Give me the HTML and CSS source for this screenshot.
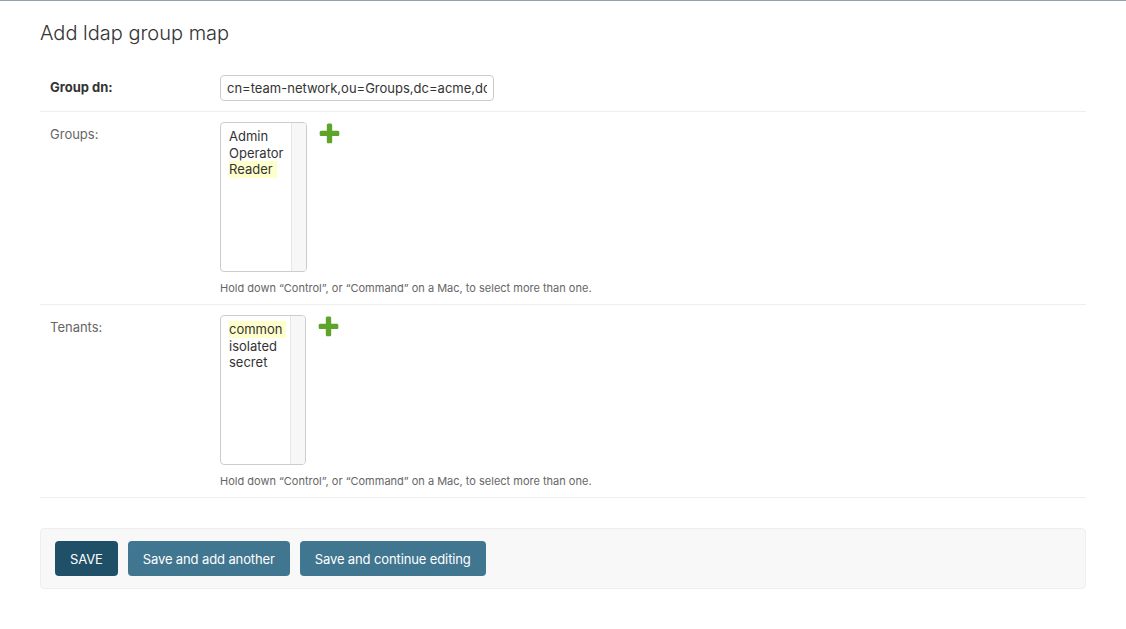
FILE: index.html
```html
<!DOCTYPE html>
<html lang="en">
<head>
    <meta charset="UTF-8">
    <title>Add ldap group map</title>
    <link rel="stylesheet" href="styles.css">
</head>
<body>
    <div class="header-line"></div>
    <div class="content">
        <h1>Add ldap group map</h1>
        <form>
            <fieldset class="module">
                <div class="form-row">
                    <label class="required">Group dn:</label>
                    <input type="text" class="text-input" value="cn=team-network,ou=Groups,dc=acme,dc=com">
                </div>
                <div class="form-row">
                    <div class="field">
                        <label>Groups:</label>
                        <div class="widget-wrapper">
                            <div class="multi-select">
                                <div class="options">
                                    <div class="option">Admin</div>
                                    <div class="option">Operator</div>
                                    <div class="option marked">Reader</div>
                                </div>
                                <div class="track"></div>
                            </div>
                            <a class="add-link" href="#">
                                <svg viewBox="0 0 1792 1792" width="25" height="25"><path fill="#5ea32a" d="M1600 796v192q0 40-28 68t-68 28h-416v416q0 40-28 68t-68 28h-192q-40 0-68-28t-28-68v-416h-416q-40 0-68-28t-28-68v-192q0-40 28-68t68-28h416v-416q0-40 28-68t68-28h192q40 0 68 28t28 68v416h416q40 0 68 28t28 68z"/></svg>
                            </a>
                        </div>
                    </div>
                    <div class="help">Hold down “Control”, or “Command” on a Mac, to select more than one.</div>
                </div>
                <div class="form-row">
                    <div class="field">
                        <label>Tenants:</label>
                        <div class="widget-wrapper">
                            <div class="multi-select narrow">
                                <div class="options">
                                    <div class="option marked">common</div>
                                    <div class="option">isolated</div>
                                    <div class="option">secret</div>
                                </div>
                                <div class="track"></div>
                            </div>
                            <a class="add-link" href="#">
                                <svg viewBox="0 0 1792 1792" width="25" height="25"><path fill="#5ea32a" d="M1600 796v192q0 40-28 68t-68 28h-416v416q0 40-28 68t-68 28h-192q-40 0-68-28t-28-68v-416h-416q-40 0-68-28t-28-68v-192q0-40 28-68t68-28h416v-416q0-40 28-68t68-28h192q40 0 68 28t28 68v416h416q40 0 68 28t28 68z"/></svg>
                            </a>
                        </div>
                    </div>
                    <div class="help">Hold down “Control”, or “Command” on a Mac, to select more than one.</div>
                </div>
            </fieldset>
            <div class="submit-row">
                <button type="button" class="button default">SAVE</button>
                <button type="button" class="button">Save and add another</button>
                <button type="button" class="button">Save and continue editing</button>
            </div>
        </form>
    </div>
</body>
</html>
```

FILE: styles.css
```css
body {
    margin: 0;
    padding: 0;
    font-family: Inter, Roboto, "Noto Sans", Arial, sans-serif;
    font-size: 14px;
    color: #333;
    background: #fff;
}
.header-line {
    height: 1px;
    background: #8fa3ae;
}
.content {
    padding: 20px 40px;
}
h1 {
    margin: 0 0 20px;
    font-size: 20px;
    font-weight: 300;
    color: #333;
    line-height: 24px;
}
fieldset {
    margin: 0;
    padding: 0;
    border: none;
}
.form-row {
    display: flow-root;
    padding: 10px;
    border-bottom: 1px solid #eee;
    font-size: 13px;
}
.form-row label {
    float: left;
    width: 160px;
    padding: 4px 10px 0 0;
    color: #666;
    line-height: 16px;
}
.form-row label.required {
    font-weight: bold;
    color: #333;
}
.field {
    display: flow-root;
}
.text-input {
    box-sizing: border-box;
    display: block;
    width: 274px;
    height: 26px;
    padding: 4px 6px;
    border: 1px solid #ccc;
    border-radius: 4px;
    font-family: inherit;
    font-size: 13px;
    color: #333;
    margin: 0;
}
.widget-wrapper {
    display: flex;
    align-items: flex-start;
}
.multi-select {
    box-sizing: border-box;
    display: flex;
    width: 87px;
    height: 150px;
    border: 1px solid #ccc;
    border-radius: 4px;
    overflow: hidden;
}
.multi-select.narrow {
    width: 86px;
}
.options {
    flex: 1;
    padding: 5px 0 0 8px;
}
.option {
    display: table;
    line-height: 16.5px;
    font-size: 13px;
    color: #333;
    padding-right: 4px;
}
.option.marked {
    background: #ffffcc;
}
.track {
    width: 14px;
    background: #f7f7f7;
    border-left: 1px solid #e6e6e6;
}
.add-link {
    display: block;
    margin: -1px 0 0 10px;
    line-height: 0;
}
.help {
    margin: 10px 0 0 170px;
    padding: 0;
    font-size: 11px;
    color: #666;
    line-height: 12px;
}
.submit-row {
    display: flex;
    gap: 10px;
    margin: 30px 0 20px;
    padding: 12px 14px;
    background: #f8f8f8;
    border: 1px solid #eee;
    border-radius: 4px;
}
.button {
    height: 35px;
    padding: 0 15px;
    border: none;
    border-radius: 4px;
    background: #417690;
    color: #fff;
    font-family: inherit;
    font-size: 13px;
    letter-spacing: -0.12px;
    cursor: pointer;
}
.button.default {
    background: #205067;
}
```
